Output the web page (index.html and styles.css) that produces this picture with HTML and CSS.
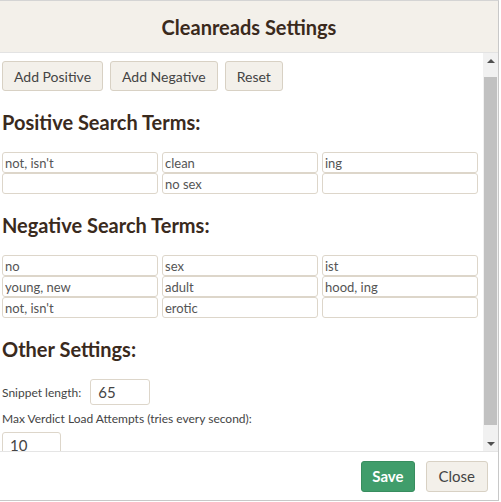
FILE: index.html
```html
<!DOCTYPE html>
<html lang="en">
<head>
  <meta charset="UTF-8" />
  <title>Cleanreads Settings</title>
  <link rel="stylesheet" href="styles.css">
</head>
<body>

  <div class="modal">
    <div class="modal-header">
      <h2>Cleanreads Settings</h2>
    </div>

    <div class="modal-body">
      <div class="modal-content">
        <div class="actions">
          <button class="btn">Add Positive</button>
          <button class="btn">Add Negative</button>
          <button class="btn">Reset</button>
        </div>

        <h3>Positive Search Terms:</h3>
        <div class="terms">
          <input type="text" value="not, isn't">
          <input type="text" value="clean">
          <input type="text" value="ing">
          <input type="text" value="">
          <input type="text" value="no sex">
          <input type="text" value="">
        </div>

        <h3>Negative Search Terms:</h3>
        <div class="terms">
          <input type="text" value="no">
          <input type="text" value="sex">
          <input type="text" value="ist">
          <input type="text" value="young, new">
          <input type="text" value="adult">
          <input type="text" value="hood, ing">
          <input type="text" value="not, isn't">
          <input type="text" value="erotic">
          <input type="text" value="">
        </div>

        <h3>Other Settings:</h3>
        <div class="setting-row">
          <label for="snippet">Snippet length:</label>
          <input class="num-input" id="snippet" type="text" value="65">
        </div>
        <label class="setting-label" for="attempts">Max Verdict Load Attempts (tries every second):</label>
        <input class="num-input" id="attempts" type="text" value="10">
      </div>

      <!-- scrollbar drawn by hand, the browser hides its own -->
      <div class="scrollbar">
        <div class="scroll-btn"><span class="arrow-up"></span></div>
        <div class="scroll-track"><div class="scroll-thumb"></div></div>
        <div class="scroll-btn"><span class="arrow-down"></span></div>
      </div>
    </div>

    <div class="modal-footer">
      <button class="btn btn-save">Save</button>
      <button class="btn btn-close">Close</button>
    </div>
  </div>

</body>
</html>
```

FILE: styles.css
```css
body {
  margin: 0;
  background: #fff;
  font-family: Lato, "Open Sans", sans-serif;
  color: #444;
}

/* Dialog */
.modal {
  width: 499px;
  height: 501px;
  box-sizing: border-box;
  border-top: 1px solid #d4d4d4;
  border-right: 1px solid #c8c8c8;
  border-bottom: 1px solid #c8c8c8;
  display: flex;
  flex-direction: column;
  background: #fff;
}

.modal-header {
  height: 51px;
  flex: none;
  background-color: #f3f0ea;
  border-bottom: 1px solid #e3e3e3;
  display: flex;
  align-items: center;
  justify-content: center;
}

.modal-header h2 {
  margin: 0;
  font-size: 20px;
  font-weight: 700;
  color: #3a2a1d;
}

.modal-body {
  flex: 1;
  min-height: 0;
  display: flex;
}

.modal-content {
  flex: 1;
  overflow: hidden;
  padding: 8px 5px 5px 2px;
}

/* Scrollbar */
.scrollbar {
  width: 15px;
  flex: none;
  background: #f1f1f1;
  display: flex;
  flex-direction: column;
}

.scroll-btn {
  height: 15px;
  flex: none;
  display: flex;
  align-items: center;
  justify-content: center;
}

.arrow-up {
  border-left: 4px solid transparent;
  border-right: 4px solid transparent;
  border-bottom: 4px solid #505050;
}

.arrow-down {
  border-left: 4px solid transparent;
  border-right: 4px solid transparent;
  border-top: 4px solid #505050;
}

.scroll-track {
  flex: 1;
  padding: 9px 1px 11px;
}

.scroll-thumb {
  height: 100%;
  background: #c1c1c1;
}

.modal-footer {
  height: 48px;
  flex: none;
  border-top: 1px solid #e5e5e5;
  display: flex;
  justify-content: flex-end;
  align-items: center;
  gap: 11px;
  padding-right: 10px;
}

/* Buttons */
.btn {
  font-family: Lato, "Open Sans", sans-serif;
  font-size: 14px;
  color: #444;
  background-color: #f3f0ea;
  border: 1px solid #d8d1c4;
  border-radius: 3px;
  height: 30px;
  padding: 0 11px;
}

.actions {
  display: flex;
  gap: 7px;
  margin-bottom: 1px;
}

.btn-save {
  background-color: #409d6b;
  border-color: #388d5f;
  color: #fff;
  font-weight: 700;
  font-size: 15px;
  height: 31px;
  padding: 0 10px;
}

.btn-close {
  font-size: 15px;
  height: 31px;
  padding: 0 12px;
}

/* Sections */
h3 {
  margin: 19px 0 18px;
  font-size: 20px;
  line-height: 24px;
  font-weight: 700;
  color: #3a2a1d;
}

.terms {
  display: grid;
  grid-template-columns: repeat(3, 156px);
  column-gap: 4px;
}

.terms input {
  height: 21px;
  box-sizing: border-box;
  border: 1px solid #ddd6ca;
  border-radius: 3px;
  padding: 0 2px;
  font-family: Lato, "Open Sans", sans-serif;
  font-size: 13px;
  color: #555;
  outline: none;
}

/* Other settings */
.setting-row {
  display: flex;
  align-items: center;
  gap: 9px;
  margin-top: 17px;
}

.setting-row label,
.setting-label {
  font-size: 12px;
  color: #444;
}

.setting-label {
  display: block;
  margin: 6px 0 6px;
}

.num-input {
  width: 60px;
  height: 26px;
  box-sizing: border-box;
  border: 1px solid #ddd6ca;
  border-radius: 3px;
  padding: 0 7px;
  font-family: Lato, "Open Sans", sans-serif;
  font-size: 15px;
  color: #444;
  outline: none;
}

#attempts {
  width: 59px;
}
```
